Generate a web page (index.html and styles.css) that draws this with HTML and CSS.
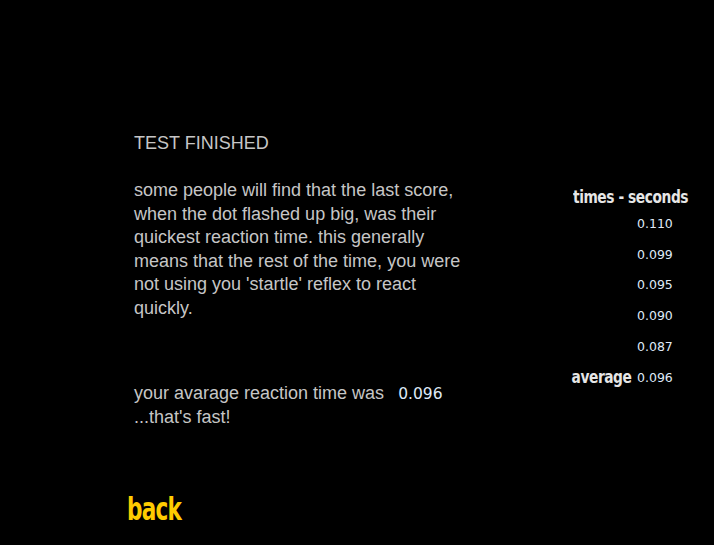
FILE: index.html
```html
<!DOCTYPE html>
<html>
<head>
<meta charset="utf-8">
<link rel="stylesheet" href="styles.css">
</head>
<body>
<div class="page">
  <div class="main">
    <div class="left">
      <div class="title">TEST FINISHED</div>
      <p class="para">some people will find that the last score,<br>when the dot flashed up big, was their<br>quickest reaction time. this generally<br>means that the rest of the time, you were<br>not using you 'startle' reflex to react<br>quickly.</p>
      <p class="result">your avarage reaction time was <span class="num">0.096</span><br>...that's fast!</p>
    </div>
    <div class="right">
      <div class="head"><span class="squeeze">times - seconds</span></div>
      <div class="rows">
        <span class="lab"></span><span class="val">0.110</span>
        <span class="lab"></span><span class="val">0.099</span>
        <span class="lab"></span><span class="val">0.095</span>
        <span class="lab"></span><span class="val">0.090</span>
        <span class="lab"></span><span class="val">0.087</span>
        <span class="lab"><span class="squeeze right-origin">average</span></span><span class="val">0.096</span>
      </div>
    </div>
  </div>
  <a class="back" href="#"><span class="squeeze back-text">back</span></a>
</div>
</body>
</html>
```
FILE: styles.css
```css
html, body {
  margin: 0;
  padding: 0;
  background: #000;
}
body {
  width: 714px;
  height: 545px;
  overflow: hidden;
  font-family: "Liberation Sans", Arial, sans-serif;
}
.page {
  padding: 131px 0 0 134px;
}
.main {
  display: flex;
}
.left {
  width: 400px;
  color: #c6c6c6;
  font-size: 18px;
}
.title {
  line-height: 24px;
}
.para {
  margin: 24px 0 0;
  line-height: 23.6px;
}
.result {
  margin: 61px 0 0;
  line-height: 23px;
}
.num {
  font-family: "DejaVu Sans", Verdana, sans-serif;
  font-size: 15.5px;
  color: #dfe9f7;
  margin-left: 9px;
}
.right {
  margin: 54px 0 0 17px;
  width: 150px;
}
.squeeze {
  display: inline-block;
  font-family: "DejaVu Sans", sans-serif;
  font-stretch: condensed;
  font-weight: bold;
  transform: scaleX(0.85);
  transform-origin: left center;
  white-space: nowrap;
}
.right-origin {
  transform-origin: right center;
}
.head {
  font-size: 18px;
  color: #e6e6e6;
  line-height: 24px;
  padding-left: 22px;
  white-space: nowrap;
  letter-spacing: -0.5px;
}
.rows {
  display: grid;
  grid-template-columns: 80px auto;
  column-gap: 6px;
  grid-auto-rows: 30.8px;
  align-items: center;
  margin-top: -1px;
}
.lab {
  font-size: 18px;
  color: #e6e6e6;
  text-align: right;
  white-space: nowrap;
  letter-spacing: -0.5px;
}
.val {
  font-family: "DejaVu Sans", Verdana, sans-serif;
  font-size: 12.5px;
  color: #dfe9f7;
}
.back {
  display: inline-block;
  margin: 63px 0 0 -7px;
  font-size: 32px;
  color: #ffcc00;
  text-decoration: none;
  line-height: 34px;
  letter-spacing: -1px;
}
.back-text {
  transform: scaleX(0.75);
}
```
